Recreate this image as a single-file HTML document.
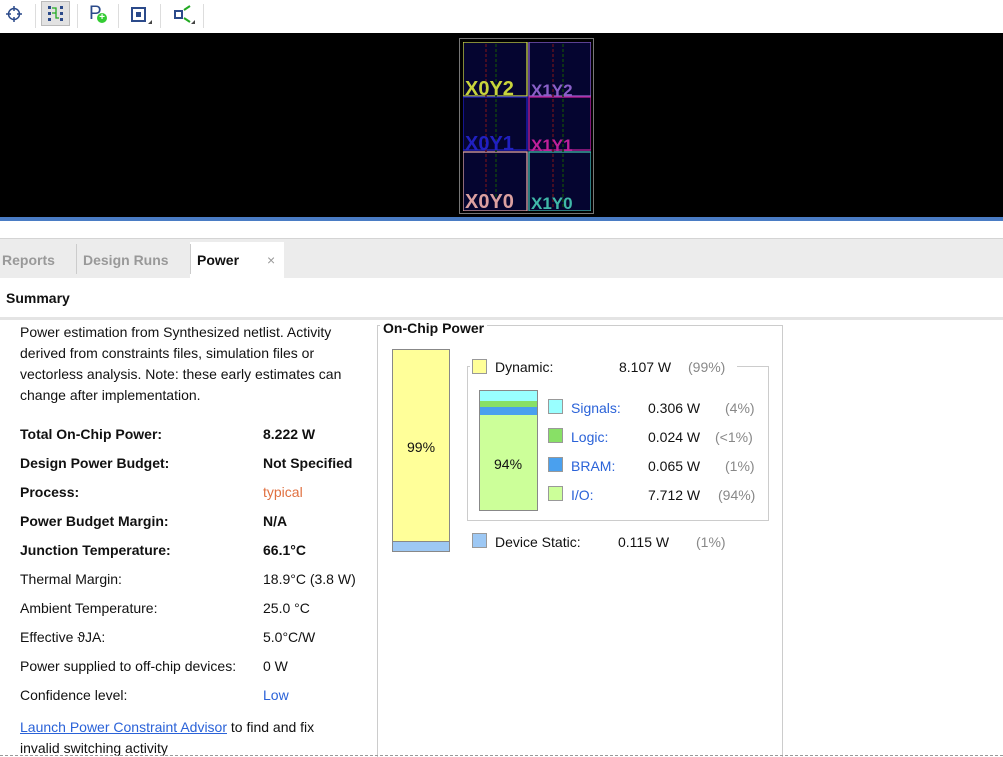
<!DOCTYPE html>
<html style="overflow:hidden;height:757px"><head><style>
*{margin:0;padding:0;box-sizing:border-box}
body{width:1003px;height:757px;overflow:hidden;background:#fff;font-family:"Liberation Sans",sans-serif;font-size:14px;color:#111;position:relative}
.a{position:absolute;white-space:nowrap}
.b{font-weight:bold}
.sep{position:absolute;top:4px;width:1px;height:24px;background:#ddd}
.sw{position:absolute;width:15px;height:15px;border:1px solid #999}
.lnk{color:#2a62d8}
.g{color:#888}
</style></head><body>
<div class="a" style="left:0;top:0;width:1003px;height:33px;background:#fff"></div>
<svg class="a" style="left:5px;top:5px" width="18" height="18"><circle cx="9" cy="9" r="5.5" fill="none" stroke="#2b4a8a" stroke-width="1.5"/><path d="M9 1v5M9 12v5M1 9h5M12 9h5" stroke="#2b4a8a" stroke-width="1.5"/></svg>
<div class="sep" style="left:35px"></div>
<div class="a" style="left:41px;top:1px;width:29px;height:25px;background:#e2e2e2;border:1px solid #bbb"></div>
<svg class="a" style="left:47px;top:5px" width="18" height="18"><rect x="1" y="1" width="3" height="3" fill="#2b4a8a"/><rect x="1" y="7" width="3" height="3" fill="#2b4a8a"/><rect x="1" y="13" width="3" height="3" fill="#2b4a8a"/><rect x="13" y="1" width="3" height="3" fill="#2b4a8a"/><rect x="13" y="7" width="3" height="3" fill="#2b4a8a"/><rect x="13" y="13" width="3" height="3" fill="#2b4a8a"/><path d="M5 3h4v10h3M9 8h-4" stroke="#2a2" fill="none" stroke-width="1.3"/></svg>
<div class="sep" style="left:77px"></div>
<div class="a" style="left:89px;top:3px;font-size:19px;color:#2b4a8a">P</div>
<div class="a" style="left:97px;top:13px;width:10px;height:10px;border-radius:5px;background:#3c3;color:#fff;font-size:10px;line-height:10px;text-align:center;font-weight:bold">+</div>
<div class="sep" style="left:118px"></div>
<div class="a" style="left:131px;top:7px;width:15px;height:15px;border:2px solid #2b4a8a"></div>
<div class="a" style="left:136px;top:12px;width:5px;height:5px;background:#2b4a8a"></div>
<div class="a" style="left:148px;top:20px;width:0;height:0;border-left:4px solid transparent;border-bottom:4px solid #444"></div>
<div class="sep" style="left:160px"></div>
<div class="a" style="left:174px;top:10px;width:9px;height:9px;border:2px solid #2b4a8a"></div>
<svg class="a" style="left:182px;top:4px" width="12" height="20"><path d="M2 6l6-4M2 14l6 4" stroke="#2a2" stroke-width="2"/></svg>
<div class="a" style="left:191px;top:20px;width:0;height:0;border-left:4px solid transparent;border-bottom:4px solid #444"></div>
<div class="sep" style="left:203px"></div>
<div class="a" style="left:0;top:33px;width:1003px;height:185px;background:#000"></div>
<div class="a" style="left:0;top:217px;width:1003px;height:4px;background:#4a7cc4"></div>
<div class="a" style="left:459px;top:38px;width:135px;height:176px;border:1px solid #777"></div>
<svg class="a" style="left:463px;top:42px" width="128" height="169" font-family="Liberation Sans,sans-serif" font-weight="bold">
<rect x="0" y="0" width="128" height="169" fill="#050530"/>
<rect x="0" y="0" width="64" height="54" fill="none" stroke="#c8d43c" stroke-width="1.3"/>
<rect x="66" y="0" width="62" height="54" fill="none" stroke="#8a60c8" stroke-width="1.3"/>
<rect x="0" y="55" width="64" height="53" fill="none" stroke="#2020c0" stroke-width="1.3"/>
<rect x="66" y="55" width="62" height="53" fill="none" stroke="#c0209a" stroke-width="1.3"/>
<rect x="0" y="110" width="64" height="59" fill="none" stroke="#dba0a0" stroke-width="1.3"/>
<rect x="66" y="110" width="62" height="59" fill="none" stroke="#40b8a8" stroke-width="1.3"/>
<path d="M23 2v165M90 2v165" stroke="#5a1020" stroke-width="1.5" stroke-dasharray="3 2"/>
<path d="M33 2v165M100 2v165" stroke="#104010" stroke-width="1.5" stroke-dasharray="3 2"/>
<text x="2" y="53" font-size="20" fill="#c8d43c">X0Y2</text>
<text x="68" y="54" font-size="17" fill="#8a60c8">X1Y2</text>
<text x="2" y="108" font-size="20" fill="#2020c0">X0Y1</text>
<text x="68" y="109" font-size="17" fill="#c0209a">X1Y1</text>
<text x="2" y="166" font-size="20" fill="#dba0a0">X0Y0</text>
<text x="68" y="167" font-size="17" fill="#40b8a8">X1Y0</text>
</svg>
<div class="a" style="left:0;top:238px;width:1003px;height:40px;background:#ececec;border-top:1px solid #d4d4d4"></div>
<div class="a" style="left:190px;top:242px;width:94px;height:36px;background:#fff"></div>
<div class="a" style="left:76px;top:244px;width:1px;height:30px;background:#ccc"></div>
<div class="a" style="left:190px;top:244px;width:1px;height:30px;background:#ccc"></div>
<div class="a b" style="left:2px;top:252px;color:#999">Reports</div>
<div class="a b" style="left:83px;top:252px;color:#999">Design Runs</div>
<div class="a b" style="left:197px;top:252px">Power</div>
<div class="a" style="left:267px;top:252px;color:#999">×</div>
<div class="a b" style="left:6px;top:290px">Summary</div>
<div class="a" style="left:0;top:317px;width:1003px;height:3px;background:#e4e4e4"></div>
<div class="a" style="left:20px;top:322px;line-height:21px;white-space:normal;width:345px">Power estimation from Synthesized netlist. Activity derived from constraints files, simulation files or vectorless analysis. Note: these early estimates can change after implementation.</div>
<div class="a b" style="left:20px;top:426px">Total On-Chip Power:</div><div class="a b" style="left:263px;top:426px">8.222 W</div>
<div class="a b" style="left:20px;top:455px">Design Power Budget:</div><div class="a b" style="left:263px;top:455px">Not Specified</div>
<div class="a b" style="left:20px;top:484px">Process:</div><div class="a" style="left:263px;top:484px;color:#e07040">typical</div>
<div class="a b" style="left:20px;top:513px">Power Budget Margin:</div><div class="a b" style="left:263px;top:513px">N/A</div>
<div class="a b" style="left:20px;top:542px">Junction Temperature:</div><div class="a b" style="left:263px;top:542px">66.1°C</div>
<div class="a" style="left:20px;top:571px">Thermal Margin:</div><div class="a" style="left:263px;top:571px">18.9°C (3.8 W)</div>
<div class="a" style="left:20px;top:600px">Ambient Temperature:</div><div class="a" style="left:263px;top:600px">25.0 °C</div>
<div class="a" style="left:20px;top:629px">Effective ϑJA:</div><div class="a" style="left:263px;top:629px">5.0°C/W</div>
<div class="a" style="left:20px;top:658px">Power supplied to off-chip devices:</div><div class="a" style="left:263px;top:658px">0 W</div>
<div class="a" style="left:20px;top:687px">Confidence level:</div><div class="a lnk" style="left:263px;top:687px">Low</div>
<div class="a" style="left:20px;top:719px"><span class="lnk" style="text-decoration:underline">Launch Power Constraint Advisor</span> to find and fix</div>
<div class="a" style="left:20px;top:740px">invalid switching activity</div>
<div class="a" style="left:377px;top:325px;width:406px;height:432px;border:1px solid #ccc;border-bottom:none"></div>
<div class="a b" style="left:380px;top:320px;background:#fff;padding:0 3px">On-Chip Power</div>
<div class="a" style="left:392px;top:349px;width:58px;height:203px;background:#ffff99;border:1px solid #888"></div>
<div class="a" style="left:393px;top:541px;width:56px;height:10px;background:#9dc8f4;border-top:1px solid #888"></div>
<div class="a" style="left:407px;top:439px">99%</div>
<div class="a" style="left:467px;top:366px;width:302px;height:155px;border:1px solid #ccc"></div>
<div class="a" style="left:470px;top:356px;width:267px;height:22px;background:#fff"></div>
<div class="sw" style="left:472px;top:359px;background:#ffff99"></div>
<div class="a" style="left:495px;top:359px">Dynamic:</div>
<div class="a" style="left:619px;top:359px">8.107 W</div>
<div class="a g" style="left:688px;top:359px">(99%)</div>
<div class="a" style="left:479px;top:390px;width:59px;height:121px;background:#ccff99;border:1px solid #888"></div>
<div class="a" style="left:480px;top:391px;width:57px;height:10px;background:#99ffff"></div>
<div class="a" style="left:480px;top:401px;width:57px;height:6px;background:#88e066"></div>
<div class="a" style="left:480px;top:407px;width:57px;height:8px;background:#4aa0ee"></div>
<div class="a" style="left:494px;top:456px">94%</div>
<div class="sw" style="left:548px;top:399px;background:#99ffff"></div>
<div class="a lnk" style="left:571px;top:400px">Signals:</div><div class="a" style="left:648px;top:400px">0.306 W</div><div class="a g" style="left:725px;top:400px">(4%)</div>
<div class="sw" style="left:548px;top:428px;background:#88e066"></div>
<div class="a lnk" style="left:571px;top:429px">Logic:</div><div class="a" style="left:648px;top:429px">0.024 W</div><div class="a g" style="left:715px;top:429px">(&lt;1%)</div>
<div class="sw" style="left:548px;top:457px;background:#4aa0ee"></div>
<div class="a lnk" style="left:571px;top:458px">BRAM:</div><div class="a" style="left:648px;top:458px">0.065 W</div><div class="a g" style="left:725px;top:458px">(1%)</div>
<div class="sw" style="left:548px;top:486px;background:#ccff99"></div>
<div class="a lnk" style="left:571px;top:487px">I/O:</div><div class="a" style="left:648px;top:487px">7.712 W</div><div class="a g" style="left:718px;top:487px">(94%)</div>
<div class="sw" style="left:472px;top:533px;background:#9dc8f4"></div>
<div class="a" style="left:495px;top:534px">Device Static:</div>
<div class="a" style="left:618px;top:534px">0.115 W</div>
<div class="a g" style="left:696px;top:534px">(1%)</div>
<div class="a" style="left:0;top:755px;width:1003px;border-top:1px dashed #999"></div>
</body></html>
